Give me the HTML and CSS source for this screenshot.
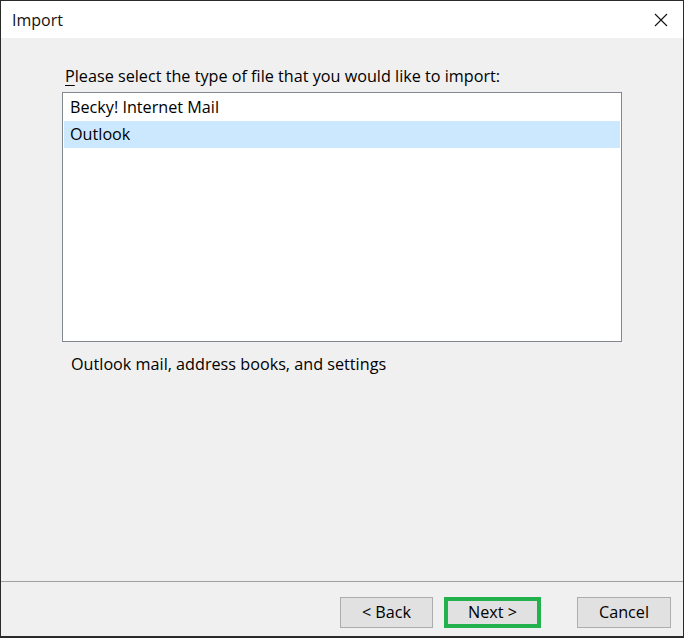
FILE: index.html
```html
<!DOCTYPE html>
<html>
<head>
<meta charset="utf-8">
<title>Import</title>
<link rel="stylesheet" href="styles.css">
</head>
<body>
<div class="window">
  <div class="titlebar">
    <span class="title">Import</span>
    <svg class="close" width="14" height="14" viewBox="0 0 14 14"><path d="M1 1L13 13M13 1L1 13" stroke="#111" stroke-width="1.1" fill="none"/></svg>
  </div>
  <div class="content">
    <div class="prompt"><u>P</u>lease select the type of file that you would like to import:</div>
    <div class="listbox">
      <div class="item">Becky! Internet Mail</div>
      <div class="item selected">Outlook</div>
    </div>
    <div class="desc">Outlook mail, address books, and settings</div>
  </div>
  <div class="footer">
    <div class="btn back">&lt; Back</div>
    <div class="next-wrap"><div class="btn next">Next &gt;</div></div>
    <div class="btn cancel">Cancel</div>
  </div>
</div>
</body>
</html>
```
FILE: styles.css
```css
html, body {
  margin: 0;
  padding: 0;
  background: #f0f0f0;
}
.window {
  width: 684px;
  height: 638px;
  box-sizing: border-box;
  border: 1px solid #2a2a2a;
  border-bottom-width: 2px;
  display: flex;
  flex-direction: column;
  background: #f0f0f0;
  font-family: "Open Sans", "Noto Sans", sans-serif;
  font-size: 16.2px;
  color: #000;
}
.titlebar {
  height: 37px;
  background: #fff;
  display: flex;
  align-items: center;
  justify-content: space-between;
  padding: 0 15px 0 11px;
  flex: none;
}
.title {
  font-size: 16px;
  color: #111;
}
.close {
  display: block;
}
.content {
  flex: 1;
  padding: 28px 0 0 64px;
}
.prompt {
  line-height: 20px;
  height: 20px;
  margin-bottom: 6px;
}
.prompt u {
  text-decoration-thickness: 1px;
  text-underline-offset: 3px;
}
.listbox {
  margin-left: -3px;
  width: 560px;
  height: 250px;
  box-sizing: border-box;
  border: 1px solid #828790;
  background: #fff;
  padding: 1px;
}
.item {
  height: 27px;
  line-height: 27px;
  padding-left: 6px;
}
.item.selected {
  background: #cce8ff;
}
.desc {
  margin-top: 12px;
  margin-left: 6px;
  line-height: 20px;
}
.footer {
  flex: none;
  height: 55px;
  box-sizing: border-box;
  border-top: 1px solid #a0a0a0;
  display: flex;
  justify-content: flex-end;
  align-items: flex-start;
  padding: 15px 12px 0 0;
}
.btn {
  box-sizing: border-box;
  height: 31px;
  line-height: 29px;
  text-align: center;
  background: #e1e1e1;
  border: 1px solid #adadad;
  font-size: 16.2px;
}
.back {
  width: 93px;
}
.next-wrap {
  margin-left: 11px;
  border: 4px solid #22b14c;
  width: 97px;
  height: 31px;
  box-sizing: border-box;
}
.next {
  width: 100%;
  height: 100%;
  line-height: 22px;
  border: none;
}
.cancel {
  width: 94px;
  margin-left: 36px;
}
```
